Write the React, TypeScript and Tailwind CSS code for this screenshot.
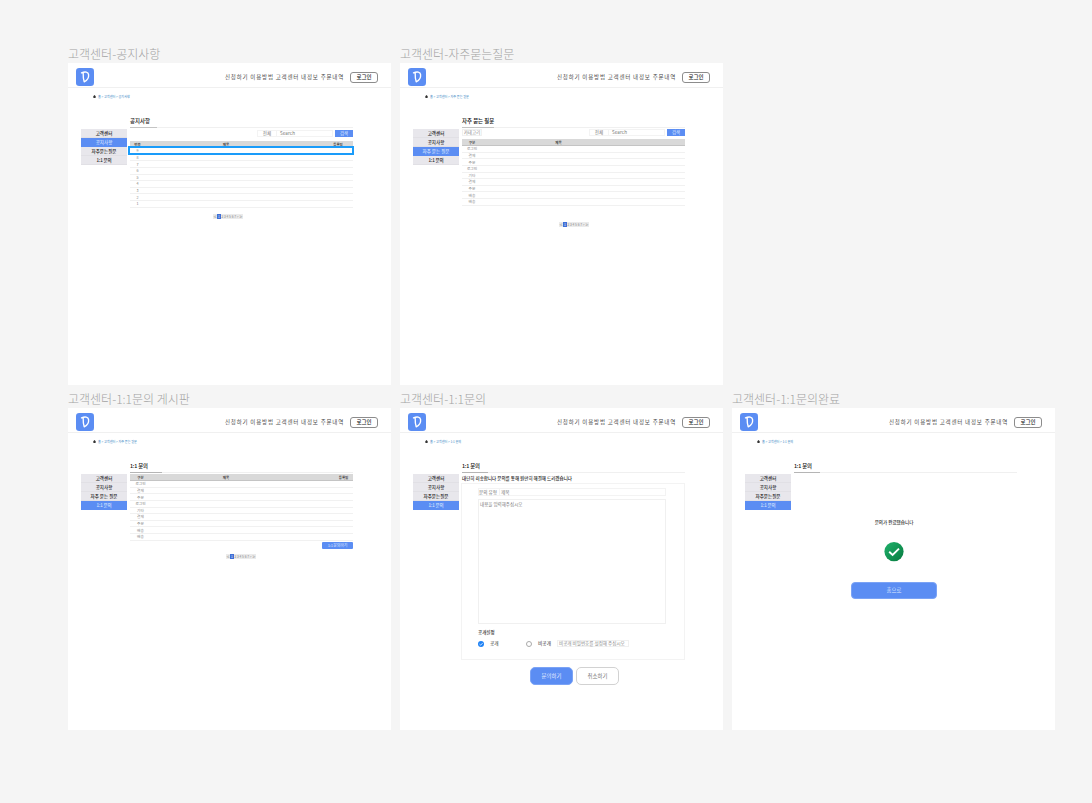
import type { ReactNode } from 'react';

function Logo() {
  return (
    <svg viewBox="0 0 18 18" className="h-[18px] w-[18px] shrink-0">
      <rect width="18" height="18" rx="3.2" fill="#5b8df3" />
      <path
        d="M7.2 5.2 C7.1 8.5 7.4 11.3 8.2 13.8 C11 12.4 12.9 9.4 12.6 6.6 C12.3 3.8 9 3.4 5.5 4.9"
        fill="none"
        stroke="#fff"
        strokeWidth="1.35"
        strokeLinecap="round"
        strokeLinejoin="round"
      />
    </svg>
  );
}

function Header() {
  return (
    <header className="flex h-[25px] items-center border-b border-[#f0f0f0] pl-[8px] pr-[13px] pt-[4px]">
      <Logo />
      <nav className="ml-auto flex pt-[2px] text-[5.5px] tracking-[0.78px] text-[#4a4a4a]">
        신청하기 이용방법 고객센터 내정보 주문내역
      </nav>
      <button className="ml-[6px] flex h-[11px] w-[28px] items-center justify-center rounded-[3px] border border-[#8c8c8c] pt-px text-[5.5px] font-medium text-[#222]">
        로그인
      </button>
    </header>
  );
}

function Breadcrumb({ path }: { path: string }) {
  return (
    <div className="flex h-[17px] items-center pl-[25px] text-[3.1px] text-[#3b87c4]">
      <svg viewBox="0 0 6 6" className="mr-[2px] h-[3px] w-[3px]">
        <path d="M3 0 L6 3 H5.2 V6 H.8 V3 H0 Z" fill="#333" />
      </svg>
      <span>{path}</span>
    </div>
  );
}

function Sidebar({ active, faq }: { active: number; faq: string }) {
  const items = ['고객센터', '공지사항', faq, '1:1 문의'];
  return (
    <ul className="ml-[13px] mt-[24px] w-[46px] shrink-0 text-[4.5px] font-medium">
      {items.map((item, i) => (
        <li
          key={item}
          className={
            i === active
              ? 'flex h-[9px] items-center justify-center bg-[#5b8df3] text-[#d5e2ff]'
              : 'flex h-[9px] items-center justify-center border-b border-[#e1e0e5] bg-[#e8e7ec] text-[#222]'
          }
        >
          <span className={item.startsWith('1') ? 'tracking-[-0.15px]' : ''}>{item}</span>
        </li>
      ))}
    </ul>
  );
}

type FrameProps = {
  name: string;
  path: string;
  title: string;
  bar: string;
  active: number;
  faq?: string;
  children: ReactNode;
};

function Frame({ name, path, title, bar, active, faq = '자주묻는질문', children }: FrameProps) {
  return (
    <section className="w-[323px]">
      <h2 className="flex h-[17px] items-center whitespace-nowrap pb-px text-[12px] font-light text-[#a3a3a3]">
        {name}
      </h2>
      <div className="h-[322px] bg-white">
        <Header />
        <Breadcrumb path={path} />
        <div className="flex">
          <Sidebar active={active} faq={faq} />
          <main className="ml-[3px] mt-[10px] w-[223px]">
            <h3 className="flex h-[12px] items-center pt-[2px] text-[5.4px] font-medium text-[#111]">
              <span className={title.startsWith('1') ? 'tracking-[-0.2px]' : ''}>{title}</span>
            </h3>
            <div className="h-px bg-[#f0f0f0]">
              <div className={bar} />
            </div>
            {children}
          </main>
        </div>
      </div>
    </section>
  );
}

function SearchBar() {
  return (
    <div className="ml-auto flex h-[7px] text-[4.5px] text-[#777]">
      <div className="flex w-[20px] items-center justify-center border border-[#f3f3f3]">전체</div>
      <div className="flex w-[56px] items-center border border-l-0 border-[#f3f3f3] pl-[3px] tracking-[0.1px]">
        Search
      </div>
      <button className="ml-[2px] flex w-[18px] items-center justify-center bg-[#5b8df3] text-[4.4px] text-[#dfe8ff]">
        검색
      </button>
    </div>
  );
}

type TableProps = {
  first: string;
  rows: string[];
  firstCol: string;
  midCol: string;
  last?: string;
  lastCol?: string;
  selected?: boolean;
};

function Table({ first, rows, firstCol, midCol, last, lastCol, selected }: TableProps) {
  return (
    <div className="relative">
      <div className="flex h-[7px] items-center border-b border-[#c4c4c4] bg-[#d9d9d9] pt-[0.6px] text-[3.5px] font-bold text-[#444]">
        <span className={firstCol}>{first}</span>
        <span className={midCol}>제목</span>
        {last && <span className={lastCol}>{last}</span>}
      </div>
      {rows.map((row, i) => (
        <div
          key={i}
          className="flex h-[6.65px] items-center border-b border-[#f1f1f1] pt-[0.6px] text-[3.7px] text-[#8a8a8a]"
        >
          <span className={firstCol}>{row}</span>
        </div>
      ))}
      {selected && (
        <div className="absolute -left-[2px] top-[5px] h-[9px] w-[226px] border-2 border-[#1a9cfa]" />
      )}
    </div>
  );
}

function Pagination() {
  const cells = ['2', '3', '4', '5', '6', '7', '>', '≫'];
  return (
    <div className="flex h-[5px] w-[30px] text-[3.2px] text-[#888]">
      <span className="flex w-[4px] items-center justify-center bg-[#ebebeb]">≪</span>
      <span className="flex w-[4px] items-center justify-center bg-[#3f6fd6] text-white">1</span>
      <span className="flex flex-1 items-center justify-around bg-[#ebebeb]">
        {cells.map((c) => (
          <span key={c}>{c}</span>
        ))}
      </span>
    </div>
  );
}

const categories = ['로그인', '결제', '주문', '로그인', '기타', '결제', '주문', '배송', '배송'];
const numbers = ['9', '8', '7', '6', '5', '4', '3', '2', '1'];

function InquiryForm() {
  return (
    <>
      <p className="flex h-[10px] items-center whitespace-nowrap text-[4.53px] font-medium text-[#222]">
        대단히 죄송합니다 문의를 통해 원만히 해결해 드리겠습니다
      </p>
      <div className="-ml-px h-[177px] w-[224px] border border-[#f3f3f3] pl-[16px] pt-[4px] text-[4.6px] text-[#777]">
        <div className="flex h-[8px] w-[188px] items-center border border-[#f3f3f3]">
          <span className="w-[20px] whitespace-nowrap">문의 유형</span>
          <span className="flex h-full flex-1 items-center border-l border-[#f3f3f3] pl-px">제목</span>
        </div>
        <div className="mt-[3px] h-[125px] w-[188px] border border-[#f0f0f0] pl-px pt-px text-[4.5px] leading-[6px]">
          내용을 입력해주십시오
        </div>
        <div className="mt-[5px] flex h-[7px] items-center text-[4.5px] font-medium text-[#333]">공개설정</div>
        <div className="mt-[4px] flex h-[7px] items-center text-[4.7px] text-[#333]">
          <svg viewBox="0 0 12 12" className="h-[6px] w-[6px]">
            <circle cx="6" cy="6" r="6" fill="#1f82f5" />
            <path d="M3 6.2 L5.2 8.3 L9.2 4.2" fill="none" stroke="#fff" strokeWidth="1.6" />
          </svg>
          <span className="ml-[6px] w-[36px]">공개</span>
          <span className="h-[6px] w-[6px] rounded-full border border-[#aaa]" />
          <span className="ml-[6px] w-[19px]">비공개</span>
          <span className="flex h-[7px] w-[72px] items-center whitespace-nowrap border border-[#f0f0f0] pl-px text-[4.55px] text-[#888]">
            비공개 비밀번호를 설정해 주십시오
          </span>
        </div>
      </div>
      <div className="ml-[68px] mt-[7px] flex gap-[3px] text-[5.4px]">
        <button className="h-[18px] w-[43px] rounded-[5px] border border-[#7ba3f5] bg-[#5b8df3] pt-px text-[#e3ecff]">
          문의하기
        </button>
        <button className="h-[18px] w-[43px] rounded-[5px] border border-[#d2d2d2] pt-px text-[#777]">
          취소하기
        </button>
      </div>
    </>
  );
}

function InquiryDone() {
  return (
    <div className="-ml-[23px] flex w-[246px] flex-col items-center pt-[45px]">
      <p className="flex h-[9px] items-center text-[4.55px] font-medium text-[#333]">문의가 완료됐습니다</p>
      <svg viewBox="0 0 20 20" className="mt-[15px] h-[20px] w-[20px]">
        <defs>
          <linearGradient id="done" x1="0" y1="0" x2="1" y2="1">
            <stop offset="0" stopColor="#20b26c" />
            <stop offset="1" stopColor="#077a3f" />
          </linearGradient>
        </defs>
        <circle cx="10" cy="9.6" r="9.6" fill="url(#done)" />
        <path d="M5.2 9.8 L8.6 13 L15 6.6" fill="none" stroke="#fff" strokeWidth="1.9" />
      </svg>
      <button className="mt-[20px] h-[17px] w-[86px] rounded-[4px] border border-[#7ba3f5] bg-[#5b8df3] pt-px text-[5.4px] text-[#dfe8ff]">
        홈으로
      </button>
    </div>
  );
}

export default function App() {
  return (
    <div className="h-[803px] w-[1092px] overflow-hidden bg-[#f5f5f5] pl-[68px] pt-[46px] font-['Noto_Sans_CJK_KR',sans-serif] leading-none">
      <div className="grid grid-cols-[323px_323px_323px] gap-x-[9px] gap-y-[6px]">
        <Frame
          name="고객센터-공지사항"
          path="홈 > 고객센터 > 공지사항"
          title="공지사항"
          bar="h-px w-[27px] bg-[#c4c4c4]"
          active={1}
        >
          <div className="flex pt-[2px]">
            <SearchBar />
          </div>
          <div className="pt-[4px]">
            <Table
              first="번호"
              rows={numbers}
              firstCol="w-[15px] text-center"
              midCol="w-[162px] text-center"
              last="등록일"
              lastCol="flex-1 pl-[16px] text-center"
              selected
            />
          </div>
          <div className="ml-[83px] mt-[6px]">
            <Pagination />
          </div>
        </Frame>

        <Frame
          name="고객센터-자주묻는질문"
          path="홈 > 고객센터 > 자주 묻는 질문"
          title="자주 묻는 질문"
          bar="h-px w-[32px] bg-[#c4c4c4]"
          active={2}
          faq="자주 묻는 질문"
        >
          <div className="flex pt-px">
            <div className="flex h-[7px] w-[20px] items-center justify-center border border-[#f0f0f0] text-[4.5px] text-[#888]">
              카테고리
            </div>
            <SearchBar />
          </div>
          <div className="pt-[3px]">
            <Table
              first="구분"
              rows={categories}
              firstCol="w-[20px] text-center"
              midCol="w-[153px] text-center"
            />
          </div>
          <div className="ml-[97px] mt-[16px]">
            <Pagination />
          </div>
        </Frame>

        <div className="col-start-1 row-start-2">
          <Frame
            name="고객센터-1:1문의 게시판"
            path="홈 > 고객센터 > 자주 묻는 질문"
            title="1:1 문의"
            bar="h-px w-[32px] bg-[#b5b5b5]"
            active={3}
            faq="자주 묻는 질문"
          >
            <div className="pt-px">
              <Table
                first="구분"
                rows={categories}
                firstCol="w-[21px] text-center"
                midCol="w-[150px] text-center"
                last="등록일"
                lastCol="flex-1 pl-[33px] text-center"
              />
            </div>
            <button className="ml-auto mt-px flex h-[7px] w-[31px] items-center justify-center rounded-[1px] bg-[#5b8df3] text-[4px] tracking-[-0.2px] text-[#dfe8ff]">
              1:1 문의하기
            </button>
            <div className="ml-[96px] mt-[5px]">
              <Pagination />
            </div>
          </Frame>
        </div>

        <div className="col-start-2 row-start-2">
          <Frame
            name="고객센터-1:1문의"
            path="홈 > 고객센터 > 1:1 문의"
            title="1:1 문의"
            bar="h-px w-[26px] bg-[#b5b5b5]"
            active={3}
          >
            <InquiryForm />
          </Frame>
        </div>

        <div className="col-start-3 row-start-2">
          <Frame
            name="고객센터-1:1문의완료"
            path="홈 > 고객센터 > 1:1 문의"
            title="1:1 문의"
            bar="h-px w-[26px] bg-[#b5b5b5]"
            active={3}
          >
            <InquiryDone />
          </Frame>
        </div>
      </div>
    </div>
  );
}
